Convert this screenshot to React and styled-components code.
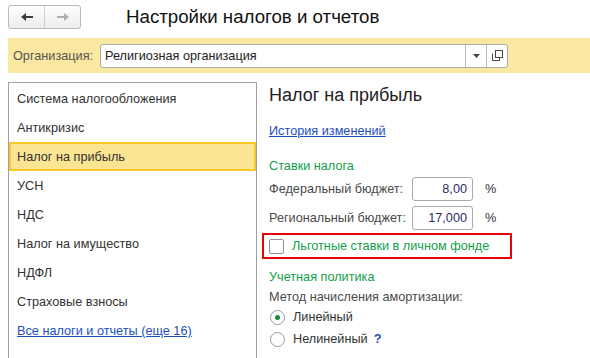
import React from 'react'
import styled, { createGlobalStyle } from 'styled-components'

const GlobalStyle = createGlobalStyle`
  html, body {
    margin: 0;
    padding: 0;
    background: #fff;
  }
  body {
    font-family: "Liberation Sans", Arial, sans-serif;
    font-size: 12.7px;
    color: #333;
  }
`

const Page = styled.div`
  width: 590px;
  height: 358px;
  overflow: hidden;
  padding-left: 8px;
  box-sizing: border-box;
`

const Header = styled.div`
  display: flex;
  align-items: center;
  height: 34px;
`

const NavGroup = styled.div`
  display: flex;
  width: 73px;
  height: 24px;
  border: 1px solid #b9b9b9;
  border-radius: 3px;
  box-sizing: border-box;
  background: linear-gradient(#ffffff, #ececec);
  overflow: hidden;
`

const NavButton = styled.div`
  flex: 1;
  display: flex;
  align-items: center;
  justify-content: center;
  & + & {
    border-left: 1px solid #d0d0d0;
  }
`

const Title = styled.h1`
  margin: 0 0 0 45px;
  font-size: 18.7px;
  font-weight: normal;
  color: #111;
  line-height: 24px;
`

const OrgBar = styled.div`
  display: flex;
  align-items: center;
  height: 35px;
  margin-top: 4px;
  padding-left: 5px;
  background: #fbe8a0;
`

const OrgLabel = styled.span`
  width: 87px;
  color: #555;
`

const Field = styled.div`
  display: flex;
  height: 24px;
  width: 408px;
  border: 1px solid #a9a9a9;
  border-radius: 3px;
  box-sizing: border-box;
  background: #fff;
  overflow: hidden;
`

const FieldText = styled.div`
  flex: 1;
  display: flex;
  align-items: center;
  padding-left: 4px;
  color: #222;
`

const FieldButton = styled.div`
  width: 20px;
  display: flex;
  align-items: center;
  justify-content: center;
  border-left: 1px solid #bdbdbd;
`

const Main = styled.div`
  display: flex;
  margin-top: 9px;
`

const Sidebar = styled.div`
  width: 249px;
  height: 290px;
  border: 1px solid #a0a0a0;
  box-sizing: border-box;
  padding-top: 1px;
`

const SideItem = styled.div`
  height: 29px;
  display: flex;
  align-items: center;
  padding-left: ${p => (p.$active ? '6px' : '8px')};
  box-sizing: border-box;
  color: #333;
  background: ${p => (p.$active ? '#fce592' : 'transparent')};
  border: ${p => (p.$active ? '2px solid #f6c82a' : 'none')};
`

const SideLink = styled.a`
  color: #1c4fbd;
  text-decoration: underline;
`

const Content = styled.div`
  flex: 1;
  padding-left: 12px;
`

const Heading = styled.h2`
  margin: 0;
  height: 26px;
  font-size: 18px;
  font-weight: normal;
  color: #222;
  line-height: 26px;
`

const HistoryLink = styled.a`
  display: inline-block;
  margin-top: 15px;
  color: #1c4fbd;
  text-decoration: underline;
  line-height: 16px;
`

const GroupTitle = styled.div`
  color: #12a04a;
  line-height: 16px;
  margin-top: ${p => p.$top || 0}px;
`

const RateRow = styled.div`
  display: flex;
  align-items: center;
  height: 24px;
  margin-top: ${p => p.$top || 0}px;
`

const RateLabel = styled.span`
  width: 143px;
  color: #4a4a4a;
`

const NumberInput = styled.div`
  width: 61px;
  height: 24px;
  border: 1px solid #a9a9a9;
  border-radius: 3px;
  box-sizing: border-box;
  display: flex;
  align-items: center;
  justify-content: flex-end;
  padding-right: 5px;
  color: #2b2b66;
`

const Percent = styled.span`
  margin-left: 12px;
  color: #333;
`

const Highlight = styled.div`
  display: flex;
  align-items: center;
  width: 250px;
  height: 26px;
  margin: 3px 0 0 -7px;
  padding-left: 5px;
  border: 2px solid #e8000b;
  box-sizing: border-box;
`

const Checkbox = styled.span`
  width: 13px;
  height: 13px;
  border: 1px solid #8f8f8f;
  border-radius: 2px;
  background: #fff;
  margin-right: 8px;
`

const GreenText = styled.span`
  color: #12a04a;
`

const PlainLine = styled.div`
  color: #4a4a4a;
  line-height: 16px;
  margin-top: 4px;
`

const RadioRow = styled.div`
  display: flex;
  align-items: center;
  height: 16px;
  margin-top: ${p => p.$top || 0}px;
  color: #333;
`

const Radio = styled.span`
  position: relative;
  width: 13px;
  height: 13px;
  border: 1px solid #9a9a9a;
  border-radius: 50%;
  margin-right: 8px;
  margin-left: 1px;
  background: #fff;
  ${p =>
    p.$checked &&
    `
    &::after {
      content: '';
      position: absolute;
      left: 4px;
      top: 4px;
      width: 5px;
      height: 5px;
      border-radius: 50%;
      background: #138c3c;
    }
  `}
`

const Help = styled.span`
  color: #1c4fbd;
  font-weight: bold;
  margin-left: 6px;
`

function ArrowIcon({ dir, color }) {
  const d = dir === 'left' ? 'M1 5 L6 1 L6 4 L13 4 L13 6 L6 6 L6 9 Z' : 'M13 5 L8 1 L8 4 L1 4 L1 6 L8 6 L8 9 Z'
  return (
    <svg width="14" height="10" viewBox="0 0 14 10">
      <path d={d} fill={color} />
    </svg>
  )
}

function DropIcon() {
  return (
    <svg width="7" height="4" viewBox="0 0 7 4">
      <path d="M0 0 L7 0 L3.5 4 Z" fill="#444" />
    </svg>
  )
}

function OpenIcon() {
  return (
    <svg width="11" height="11" viewBox="0 0 11 11">
      <rect x="3.5" y="0.5" width="7" height="7" fill="none" stroke="#444" />
      <path d="M0.5 3.5 V10.5 H7.5 V7.5" fill="none" stroke="#444" />
    </svg>
  )
}

const sections = [
  'Система налогообложения',
  'Антикризис',
  'Налог на прибыль',
  'УСН',
  'НДС',
  'Налог на имущество',
  'НДФЛ',
  'Страховые взносы',
]

export default function App() {
  return (
    <>
      <GlobalStyle />
      <Page>
        <Header>
          <NavGroup>
            <NavButton><ArrowIcon dir="left" color="#3d3d3d" /></NavButton>
            <NavButton><ArrowIcon dir="right" color="#b0b0b0" /></NavButton>
          </NavGroup>
          <Title>Настройки налогов и отчетов</Title>
        </Header>

        <OrgBar>
          <OrgLabel>Организация:</OrgLabel>
          <Field>
            <FieldText>Религиозная организация</FieldText>
            <FieldButton><DropIcon /></FieldButton>
            <FieldButton><OpenIcon /></FieldButton>
          </Field>
        </OrgBar>

        <Main>
          <Sidebar>
            {sections.map(name => (
              <SideItem key={name} $active={name === 'Налог на прибыль'}>{name}</SideItem>
            ))}
            <SideItem><SideLink>Все налоги и отчеты (еще 16)</SideLink></SideItem>
          </Sidebar>

          <Content>
            <Heading>Налог на прибыль</Heading>
            <HistoryLink>История изменений</HistoryLink>

            <GroupTitle $top={19}>Ставки налога</GroupTitle>
            <RateRow $top={3}>
              <RateLabel>Федеральный бюджет:</RateLabel>
              <NumberInput>8,00</NumberInput>
              <Percent>%</Percent>
            </RateRow>
            <RateRow $top={5}>
              <RateLabel>Региональный бюджет:</RateLabel>
              <NumberInput>17,000</NumberInput>
              <Percent>%</Percent>
            </RateRow>
            <Highlight>
              <Checkbox />
              <GreenText>Льготные ставки в личном фонде</GreenText>
            </Highlight>

            <GroupTitle $top={10}>Учетная политика</GroupTitle>
            <PlainLine>Метод начисления амортизации:</PlainLine>
            <RadioRow $top={4}>
              <Radio $checked />
              Линейный
            </RadioRow>
            <RadioRow $top={6}>
              <Radio />
              Нелинейный
              <Help>?</Help>
            </RadioRow>
          </Content>
        </Main>
      </Page>
    </>
  )
}
